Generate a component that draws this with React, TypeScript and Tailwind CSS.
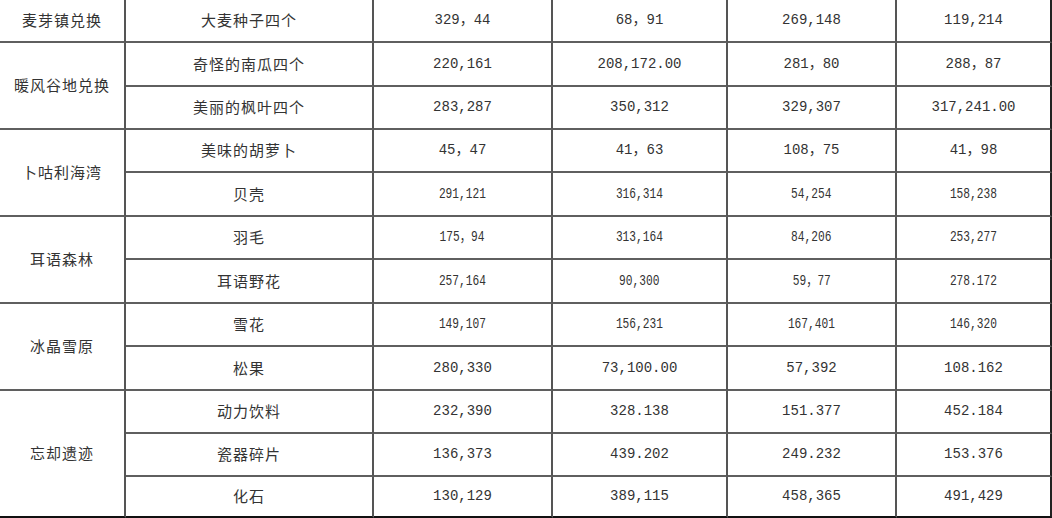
type Row = { group?: { name: string; span: number }; item: string; vals: string[]; narrow?: boolean };

const rows: Row[] = [
  { group: { name: "麦芽镇兑换", span: 1 }, item: "大麦种子四个", vals: ["329，44", "68，91", "269,148", "119,214"] },
  { group: { name: "暖风谷地兑换", span: 2 }, item: "奇怪的南瓜四个", vals: ["220,161", "208,172.00", "281，80", "288，87"] },
  { item: "美丽的枫叶四个", vals: ["283,287", "350,312", "329,307", "317,241.00"] },
  { group: { name: "卜咕利海湾", span: 2 }, item: "美味的胡萝卜", vals: ["45，47", "41，63", "108，75", "41，98"] },
  { item: "贝壳", vals: ["291,121", "316,314", "54,254", "158,238"], narrow: true },
  { group: { name: "耳语森林", span: 2 }, item: "羽毛", vals: ["175，94", "313,164", "84,206", "253,277"], narrow: true },
  { item: "耳语野花", vals: ["257,164", "90,300", "59，77", "278.172"], narrow: true },
  { group: { name: "冰晶雪原", span: 2 }, item: "雪花", vals: ["149,107", "156,231", "167,401", "146,320"], narrow: true },
  { item: "松果", vals: ["280,330", "73,100.00", "57,392", "108.162"] },
  { group: { name: "忘却遗迹", span: 3 }, item: "动力饮料", vals: ["232,390", "328.138", "151.377", "452.184"] },
  { item: "瓷器碎片", vals: ["136,373", "439.202", "249.232", "153.376"] },
  { item: "化石", vals: ["130,129", "389,115", "458,365", "491,429"] },
];

const cjk = "font-['Noto_Sans_CJK_SC',sans-serif] text-[15px] tracking-[1px] text-[#333]";
const mono = "font-['Liberation_Mono','Noto_Sans_CJK_SC',monospace] text-[14px] text-[#333]";

export default function App() {
  return (
    <div className="h-[518px] w-[1052px] overflow-hidden bg-white">
      <div className="grid grid-cols-[126px_248px_179px_175px_169px_155px] grid-rows-[43px_44px_43px_43px_44px_43px_44px_43px_44px_43px_43px_41px]">
        {rows.map((r, i) => {
          const last = i === rows.length - 1;
          const bottom = last ? "border-b-2 border-b-[#111]" : "border-b-2 border-b-[#5f5f5f]";
          return [
            r.group && (
              <div
                key={`g${i}`}
                className={`flex items-center justify-center border-r-2 border-r-[#555] ${
                  i + r.group.span === rows.length ? "border-b-2 border-b-[#111]" : "border-b-2 border-b-[#5f5f5f]"
                } ${cjk} ${r.group.span === 2 ? "row-span-2" : r.group.span === 3 ? "row-span-3" : ""}`}
              >
                {r.group.name}
              </div>
            ),
            <div key={`i${i}`} className={`flex items-center justify-center border-r-2 border-r-[#555] ${bottom} ${cjk}`}>
              {r.item}
            </div>,
            ...r.vals.map((v, j) => (
              <div
                key={`v${i}-${j}`}
                className={`flex items-center justify-center border-r-2 ${
                  j === 3 ? "border-r-[#222]" : "border-r-[#555]"
                } ${bottom} ${mono}`}
              >
                <span className={r.narrow ? "inline-block scale-x-[0.8]" : ""}>{v}</span>
              </div>
            )),
          ];
        })}
      </div>
    </div>
  );
}
